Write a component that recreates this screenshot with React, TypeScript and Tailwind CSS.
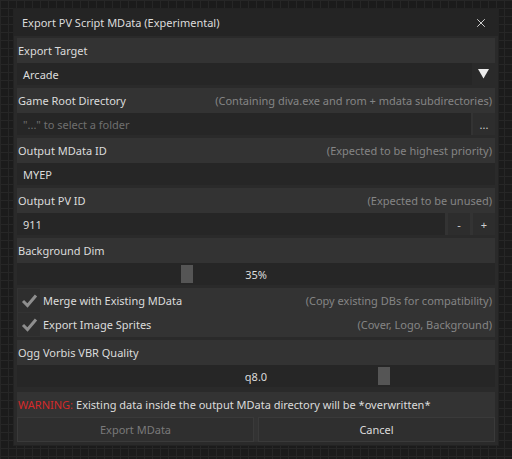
import { X } from "lucide-react";

const font = { fontFamily: '"Noto Sans", "Open Sans", sans-serif' };

function Header({ label, hint }: { label: string; hint?: string }) {
  return (
    <div className="flex h-[25px] items-center justify-between pl-[1px] pr-[3px]">
      <span className="text-[#dcdcdc]">{label}</span>
      {hint && <span className="text-[#858585]">{hint}</span>}
    </div>
  );
}

function Field({ children, className = "" }: { children?: React.ReactNode; className?: string }) {
  return (
    <div className={`flex h-[22px] items-center bg-[#262626] px-[6px] text-[#dcdcdc] ${className}`}>{children}</div>
  );
}

function SmallButton({ children }: { children: React.ReactNode }) {
  return (
    <div className="flex h-[22px] w-[22px] items-center justify-center bg-[#2d2d2d] text-[11px] text-[#cfcfcf]">
      {children}
    </div>
  );
}

function Slider({ value, thumb }: { value: string; thumb: number }) {
  return (
    <div className="relative flex h-[22px] items-center justify-center bg-[#262626] text-[#dcdcdc]">
      <span>{value}</span>
      <div
        className="absolute top-[2px] h-[18px] w-[12px] bg-[#555555]"
        style={{ left: thumb }}
      />
    </div>
  );
}

function Check({ label, hint }: { label: string; hint: string }) {
  return (
    <div className="flex h-[23px] items-center justify-between pl-[1px] pr-[3px]">
      <div className="flex items-center gap-[3px]">
        <div className="flex h-[23px] w-[22px] items-center justify-center bg-[#2e2e2e]">
          <svg width="17" height="15" viewBox="0 0 17 15">
            <path d="M2 8 L6.5 12.5 L15 2.5" fill="none" stroke="#8e8e8e" strokeWidth="3" />
          </svg>
        </div>
        <span className="text-[#dcdcdc]">{label}</span>
      </div>
      <span className="text-[#858585]">{hint}</span>
    </div>
  );
}

export default function App() {
  return (
    <div
      className="h-[459px] w-[512px] overflow-hidden bg-[#1b1b1b] bg-[linear-gradient(#262626_1px,transparent_1px),linear-gradient(90deg,#262626_1px,transparent_1px)] bg-[size:8px_8px] pl-[14px] pt-[9px] text-[11px] leading-none"
      style={font}
    >
      <div className="flex h-[436px] w-[484px] flex-col bg-[#2a2a2a] shadow-[0_0_0_1px_#232323]">
        <div className="flex h-[27px] items-center justify-between bg-[#242424] pl-[8px] pr-[10px]">
          <span className="text-[#dcdcdc]">Export PV Script MData (Experimental)</span>
          <X className="h-[14px] w-[14px] text-[#e6e6e6]" strokeWidth={1.5} />
        </div>

        <div className="flex flex-col gap-[3px] px-[3px] pt-[2px]">
          <div className="bg-[#333333]">
            <Header label="Export Target" />
            <div className="flex h-[22px] bg-[#262626]">
              <Field className="flex-1">Arcade</Field>
              <div className="flex w-[23px] items-center justify-center bg-[#2a2a2a]">
                <svg width="11" height="10" viewBox="0 0 11 10">
                  <path d="M0 0 H11 L5.5 9.5 Z" fill="#ececec" />
                </svg>
              </div>
            </div>
          </div>

          <div className="bg-[#333333]">
            <Header label="Game Root Directory" hint="(Containing diva.exe and rom + mdata subdirectories)" />
            <div className="flex h-[22px] gap-[2px]">
              <Field className="flex-1">
                <span className="text-[#6f6f6f]">"..." to select a folder</span>
              </Field>
              <SmallButton>...</SmallButton>
            </div>
          </div>

          <div className="bg-[#333333]">
            <Header label="Output MData ID" hint="(Expected to be highest priority)" />
            <Field>MYEP</Field>
          </div>

          <div className="bg-[#333333]">
            <Header label="Output PV ID" hint="(Expected to be unused)" />
            <div className="flex h-[22px] gap-[3px]">
              <Field className="flex-1">911</Field>
              <SmallButton>-</SmallButton>
              <SmallButton>+</SmallButton>
            </div>
          </div>

          <div className="bg-[#333333]">
            <Header label="Background Dim" />
            <Slider value="35%" thumb={164} />
          </div>

          <div className="flex flex-col gap-[1px] bg-[#333333] py-[1px]">
            <Check label="Merge with Existing MData" hint="(Copy existing DBs for compatibility)" />
            <Check label="Export Image Sprites" hint="(Cover, Logo, Background)" />
          </div>

          <div className="bg-[#333333]">
            <Header label="Ogg Vorbis VBR Quality" />
            <Slider value="q8.0" thumb={361} />
          </div>

          <div className="mt-[2px] bg-[#333333]">
            <div className="flex h-[25px] items-center pl-[1px]">
              <span className="text-[#d42a2a]">WARNING:</span>
              <span className="ml-[3px] text-[#dcdcdc]">
                Existing data inside the output MData directory will be *overwritten*
              </span>
            </div>
            <div className="flex h-[25px] gap-[4px]">
              <div className="flex flex-1 items-center justify-center border border-[#3a3a3a] bg-[#2f2f2f] text-[#7a7a7a]">
                Export MData
              </div>
              <div className="flex flex-1 items-center justify-center border border-[#3a3a3a] bg-[#2f2f2f] text-[#dcdcdc]">
                Cancel
              </div>
            </div>
          </div>
        </div>
      </div>
    </div>
  );
}
